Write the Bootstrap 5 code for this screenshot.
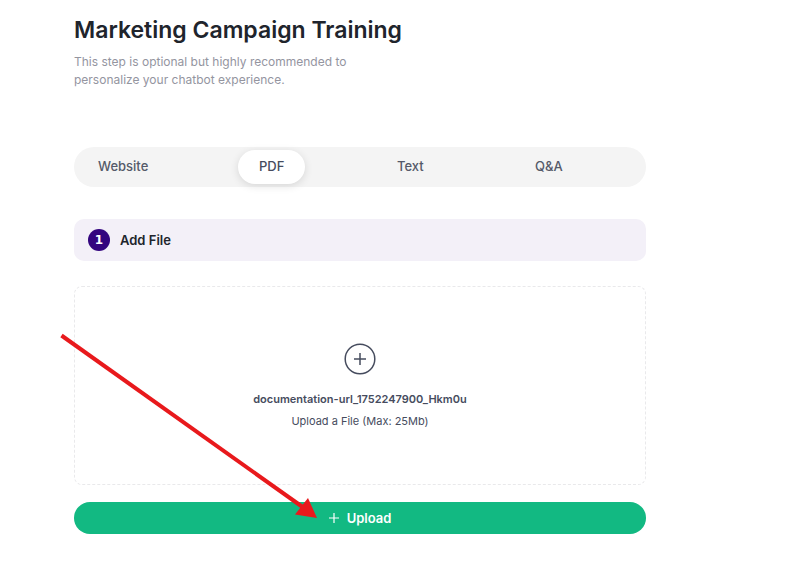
<!DOCTYPE html>
<html lang="en">
<head>
<meta charset="utf-8">
<meta name="viewport" content="width=device-width, initial-scale=1">
<title>Marketing Campaign Training</title>
<link href="https://cdn.jsdelivr.net/npm/bootstrap@5.3.0/dist/css/bootstrap.min.css" rel="stylesheet">
<style>
body { font-family: Inter, "Liberation Sans", sans-serif; font-size: 13px; line-height: 18px; color: #464c5e; background: #fff; }
.training { padding: 16px 166px 32px 74px; }
.training-title { font-size: 23px; line-height: 28px; color: #20242c; }
.training-intro { font-size: 12px; max-width: 300px; margin-top: 9px; color: #94959f; }
.source-tabs { display: grid; grid-template-columns: 161fr 138fr 138fr 129fr; background: #f4f4f4; padding: 3px; margin-top: 58px; }
.source-tabs .nav-link { font-size: 13px; line-height: 18px; padding: 7px 21px 9px; color: #555a69; border-radius: 17px; }
.source-tabs .nav-link.active { color: #464c5e; background: #fff; box-shadow: 0 2px 8px rgba(0, 0, 0, .12); }
.step-bar { background: #f3f0f8; color: #20242c; border-radius: 10px; margin-top: 32px; padding: 10px 14px; gap: 10px; }
.step-number { width: 22px; height: 22px; background: #33057f; font-family: "DejaVu Sans", sans-serif; font-size: 12px; }
.drop-zone { border: 1px dashed #e9e9eb; border-radius: 8px; margin-top: 25px; padding: 55px 16px 54px; cursor: pointer; font-size: 11px; }
.file-name { margin-top: 14px; }
.file-hint { margin-top: 4px; }
.btn-upload { --bs-btn-color: #fff; --bs-btn-bg: #12b982; --bs-btn-hover-color: #fff; --bs-btn-hover-bg: #0fa674; --bs-btn-active-color: #fff; --bs-btn-active-bg: #0d9669; --bs-btn-border-width: 0; font-size: 13px; line-height: 18px; padding: 7px 16px; margin-top: 17px; }
.pointer-arrow { left: 0; top: 0; pointer-events: none; }
</style>
<script src="https://cdn.jsdelivr.net/npm/bootstrap@5.3.0/dist/js/bootstrap.bundle.min.js" defer></script>
</head>
<body>
<main class="training position-relative">
  <h1 class="training-title fw-semibold mb-0">Marketing Campaign Training</h1>
  <p class="training-intro mb-0">This step is optional but highly recommended to personalize your chatbot experience.</p>

  <div class="source-tabs rounded-pill" role="tablist" aria-label="Training source">
    <div><button type="button" class="nav-link border-0 bg-transparent fw-medium" role="tab" aria-selected="false">Website</button></div>
    <div><button type="button" class="nav-link active border-0 fw-medium" role="tab" aria-selected="true">PDF</button></div>
    <div><button type="button" class="nav-link border-0 bg-transparent fw-medium" role="tab" aria-selected="false">Text</button></div>
    <div><button type="button" class="nav-link border-0 bg-transparent fw-medium" role="tab" aria-selected="false">Q&amp;A</button></div>
  </div>

  <div class="step-bar d-flex align-items-center fw-semibold">
    <span class="step-number rounded-circle d-flex align-items-center justify-content-center text-white fw-bold">1</span>
    <span>Add File</span>
  </div>

  <label class="drop-zone d-flex flex-column align-items-center" for="pdf-file">
    <svg width="34" height="34" viewBox="0 0 34 34" fill="none" stroke="#464c5e" stroke-width="1.5" aria-hidden="true">
      <circle cx="17" cy="17" r="14.8"/><path d="M17 11v12M11 17h12"/>
    </svg>
    <span class="file-name fw-semibold">documentation-url_1752247900_Hkm0u</span>
    <span class="file-hint">Upload a File (Max: 25Mb)</span>
    <input class="visually-hidden" type="file" id="pdf-file" accept="application/pdf">
  </label>

  <button type="button" class="btn btn-upload rounded-pill w-100 fw-semibold d-flex align-items-center justify-content-center">
    <svg class="me-2" width="10" height="10" viewBox="0 0 10 10" stroke="currentColor" stroke-width="1.2" aria-hidden="true"><path d="M5 0v10M0 5h10"/></svg>
    Upload
  </button>

  <svg class="pointer-arrow position-absolute" width="330" height="530" viewBox="0 0 330 530" aria-hidden="true">
    <path d="M61.5 335.5 304 508" stroke="#e8191c" stroke-width="4" fill="none"/>
    <path d="M317 518 295 514.5 308 498Z" fill="#e8191c"/>
  </svg>
</main>
</body>
</html>
